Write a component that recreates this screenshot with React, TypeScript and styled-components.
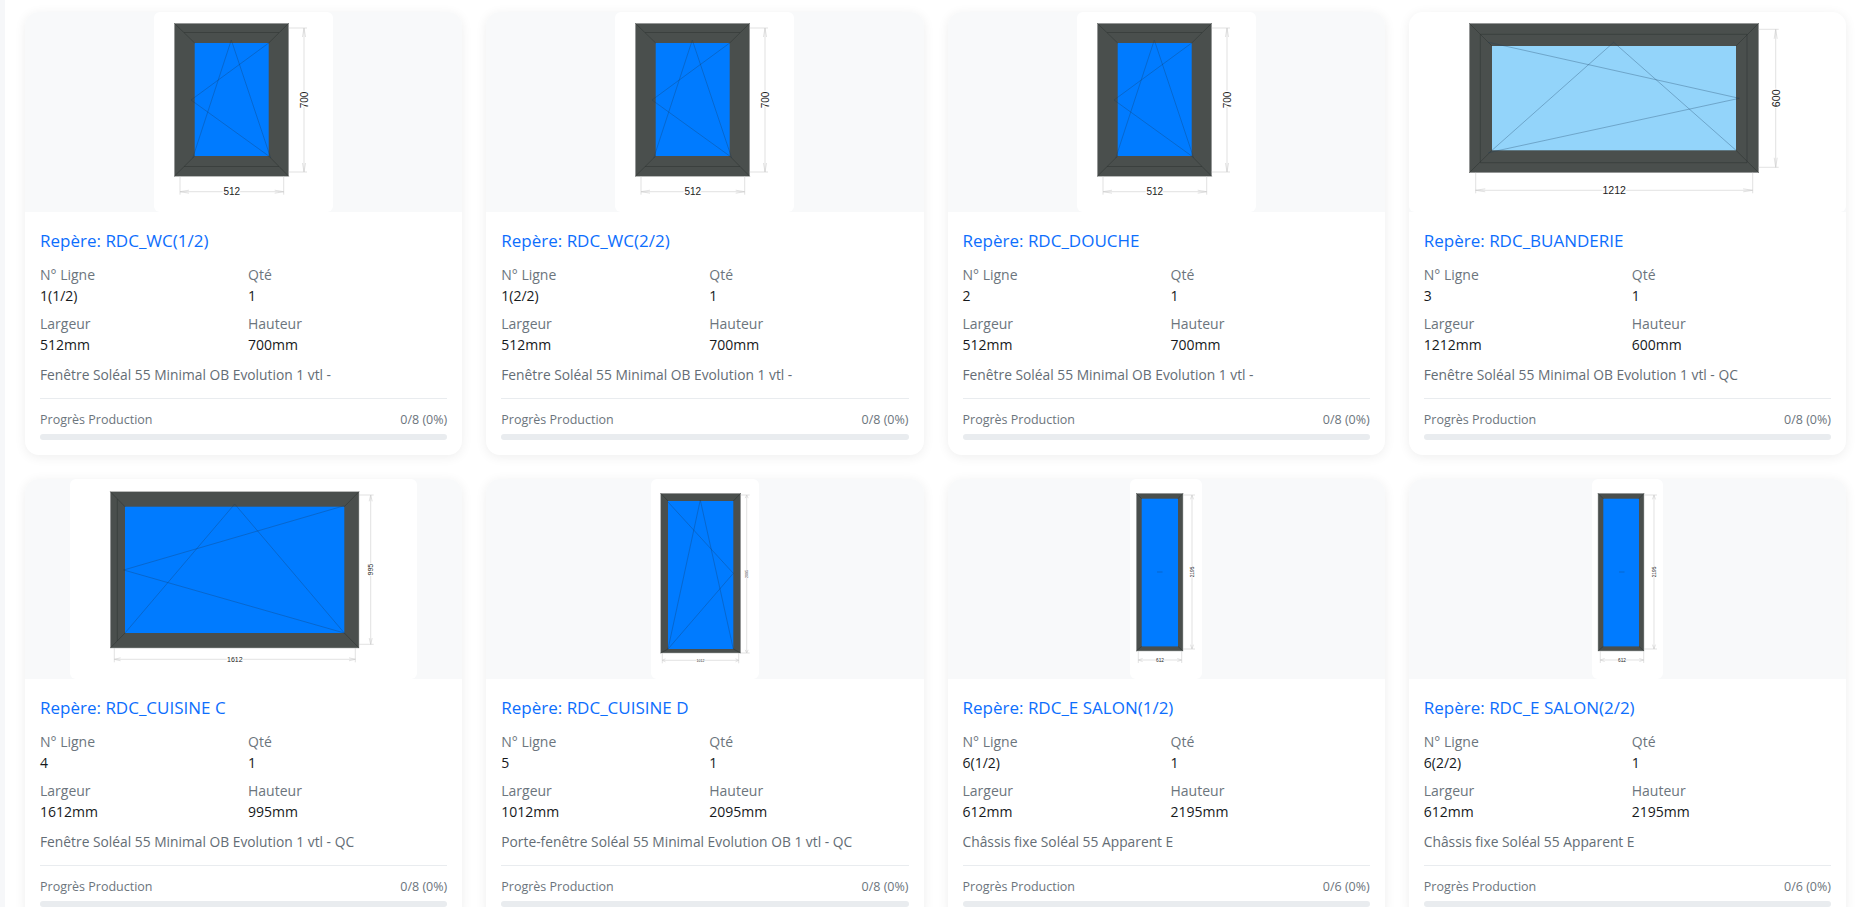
import React from 'react';
import styled, { createGlobalStyle } from 'styled-components';

const GlobalStyle = createGlobalStyle`
  html, body {
    margin: 0;
    height: 100%;
    overflow: hidden;
    background: #fff;
  }
  body {
    font-family: "Open Sans", "Noto Sans", "Liberation Sans", sans-serif;
    color: #212529;
  }
`;

const Page = styled.div`
  height: 907px;
  background: #fff;
  border-left: 5px solid #f6f7f9;
  padding: 12px 16px 0 20px;
  box-sizing: border-box;
  overflow: hidden;
`;

const Grid = styled.div`
  display: grid;
  grid-template-columns: repeat(4, 1fr);
  gap: 24px;
`;

const Card = styled.article`
  height: 443px;
  background: #fff;
  border-radius: 14px;
  overflow: hidden;
  box-shadow: 0 2px 12px rgba(0, 0, 0, 0.07);
  display: flex;
  flex-direction: column;
`;

const ImageArea = styled.div`
  height: 200px;
  background: #f8f9fa;
  display: flex;
  justify-content: center;
  flex: none;
`;

const Drawing = styled.svg`
  display: block;
  height: 200px;
  background: #fff;
  border-radius: 6px;
`;

const Body = styled.div`
  padding: 17px 15px 15px;
  display: flex;
  flex-direction: column;
`;

const Title = styled.h5`
  margin: 0 0 11px;
  font-size: 17px;
  line-height: 24px;
  font-weight: 500;
  color: #0d6efd;
`;

const Specs = styled.div`
  display: grid;
  grid-template-columns: 208px 1fr;
  row-gap: 7px;
`;

const Spec = styled.div`
  display: flex;
  flex-direction: column;
`;

const SpecLabel = styled.span`
  font-size: 14px;
  line-height: 21px;
  color: #6c757d;
`;

const SpecValue = styled.span`
  font-size: 14px;
  line-height: 21px;
  font-weight: 500;
  color: #16191c;
`;

const Description = styled.p`
  margin: 9px 0 13px;
  font-size: 13.8px;
  line-height: 21px;
  color: #646d75;
`;

const Progress = styled.div`
  border-top: 1px solid #e9ecef;
  padding-top: 12px;
`;

const ProgressHead = styled.div`
  display: flex;
  justify-content: space-between;
  font-size: 12.5px;
  line-height: 18px;
  color: #6c757d;
  margin-bottom: 5px;
`;

const ProgressTrack = styled.div`
  height: 6px;
  border-radius: 3px;
  background: #e9ecef;
`;

type Rect = [number, number, number, number];

type Shape = {
  panel: number;
  frame: Rect;
  glass: Rect;
  glassColor?: string;
  inner?: string;
  opening?: string;
  dimX: [number, number, number]; // x, y haut, y bas
  dimY: [number, number, number]; // y, x gauche, x droite
  label: number;
};

type Item = {
  repere: string;
  ligne: string;
  largeur: number;
  hauteur: number;
  description: string;
  total: number;
  shape: Shape;
};

const smallWindow: Shape = {
  panel: 179,
  frame: [20.3, 11.3, 114.4, 153],
  glass: [40.7, 31, 74, 113],
  inner: 'M30 20.5H125M30 154.5H125',
  opening: 'M38.7 146L77.3 28L116.7 146M114.7 31L37 88L114.7 144',
  dimX: [150, 16, 160],
  dimY: [179.7, 26, 129.7],
  label: 10,
};

const wideWindow: Shape = {
  panel: 437,
  frame: [60.3, 11.3, 289.4, 149.4],
  glass: [83, 34, 244, 104.3],
  glassColor: '#93d4fa',
  inner: 'M71.3 150.7V22.3H338V150.7H71.3',
  opening: 'M83 138.3L204.7 30.3L327 138.3M79.3 30.3L330.3 86.3L79.3 140.7',
  dimX: [366.7, 17.3, 155.3],
  dimY: [178.3, 66.7, 343.7],
  label: 10.6,
};

const kitchenWindow: Shape = {
  panel: 347,
  frame: [40.3, 12.7, 248.7, 156.3],
  glass: [55, 27.7, 219.3, 126.3],
  inner: 'M47.3 20V162',
  opening: 'M55 154L164.7 25L274.3 154M274.3 26.7L53.7 91L274.3 154',
  dimX: [300.7, 16, 165.3],
  dimY: [180.3, 44.3, 285.3],
  label: 7,
};

const door: Shape = {
  panel: 108,
  frame: [9.7, 14.3, 80, 159.7],
  glass: [17, 22, 65.3, 148],
  opening: 'M17 170L49.3 21L82.3 170M17 23L82.3 94.3L17 170',
  dimX: [95.7, 16, 174],
  dimY: [181.3, 11.3, 87.7],
  label: 3.5,
};

const fixedLeft: Shape = {
  panel: 72,
  frame: [6.3, 14.3, 46.7, 157.7],
  glass: [11.7, 19.7, 36.3, 147.7],
  opening: 'M27 93H32.5',
  dimX: [62, 16, 170],
  dimY: [181, 8.3, 51.7],
  label: 4.8,
};

const fixedRight: Shape = { ...fixedLeft, panel: 70.4, frame: [6, 14.3, 46, 157.7], glass: [11.3, 19.7, 35.7, 147.7] };

const fen = 'Fenêtre Soléal 55 Minimal OB Evolution 1 vtl -';
const fixe = 'Châssis fixe Soléal 55 Apparent E';

const items: Item[] = [
  { repere: 'RDC_WC(1/2)', ligne: '1(1/2)', largeur: 512, hauteur: 700, description: fen, total: 8, shape: smallWindow },
  { repere: 'RDC_WC(2/2)', ligne: '1(2/2)', largeur: 512, hauteur: 700, description: fen, total: 8, shape: smallWindow },
  { repere: 'RDC_DOUCHE', ligne: '2', largeur: 512, hauteur: 700, description: fen, total: 8, shape: smallWindow },
  { repere: 'RDC_BUANDERIE', ligne: '3', largeur: 1212, hauteur: 600, description: fen + ' QC', total: 8, shape: wideWindow },
  { repere: 'RDC_CUISINE C', ligne: '4', largeur: 1612, hauteur: 995, description: fen + ' QC', total: 8, shape: kitchenWindow },
  { repere: 'RDC_CUISINE D', ligne: '5', largeur: 1012, hauteur: 2095, description: 'Porte-fenêtre Soléal 55 Minimal Evolution OB 1 vtl - QC', total: 8, shape: door },
  { repere: 'RDC_E SALON(1/2)', ligne: '6(1/2)', largeur: 612, hauteur: 2195, description: fixe, total: 6, shape: fixedLeft },
  { repere: 'RDC_E SALON(2/2)', ligne: '6(2/2)', largeur: 612, hauteur: 2195, description: fixe, total: 6, shape: fixedRight },
];

// dessin technique de la fenêtre avec ses cotes
const WindowDrawing = ({ item }: { item: Item }) => {
  const { panel, frame, glass, glassColor, inner, opening, dimX, dimY, label } = item.shape;
  const [fx, fy, fw, fh] = frame;
  const [gx, gy, gw, gh] = glass;
  const [hx, hTop, hBottom] = dimX;
  const [wy, wLeft, wRight] = dimY;
  const tick = label * 0.9;
  const textProps = {
    textAnchor: 'middle' as const,
    fontFamily: 'Liberation Sans, sans-serif',
    fontSize: label,
    fill: '#222',
    stroke: '#fff',
    strokeWidth: label * 0.25,
    paintOrder: 'stroke',
  };

  return (
    <Drawing width={panel} height={200} viewBox={`0 0 ${panel} 200`}>
      <rect x={fx} y={fy} width={fw} height={fh} fill="#4a4f4d" stroke="#a9acab" strokeWidth={0.5} />
      <rect x={gx} y={gy} width={gw} height={gh} fill={glassColor ?? '#007bff'} />
      <g fill="none" stroke="#2d3230" strokeWidth={0.5}>
        <path d={`M${fx} ${fy}L${gx} ${gy}M${fx + fw} ${fy}L${gx + gw} ${gy}M${fx} ${fy + fh}L${gx} ${gy + gh}M${fx + fw} ${fy + fh}L${gx + gw} ${gy + gh}`} />
        {inner && <path d={inner} />}
      </g>
      {opening && <path d={opening} fill="none" stroke="#17395c" strokeOpacity={0.6} strokeWidth={0.5} />}
      <g fill="none" stroke="#cfcfcf" strokeWidth={0.6}>
        <path d={`M${fx + fw} ${hTop}H${hx + 3}M${fx + fw} ${hBottom}H${hx + 3}M${hx} ${hTop}V${hBottom}`} />
        <path d={`M${hx - 1.5} ${hTop + tick}L${hx} ${hTop}L${hx + 1.5} ${hTop + tick}M${hx - 1.5} ${hBottom - tick}L${hx} ${hBottom}L${hx + 1.5} ${hBottom - tick}`} />
        <path d={`M${wLeft} ${fy + fh}V${wy + 3}M${wRight} ${fy + fh}V${wy + 3}M${wLeft} ${wy}H${wRight}`} />
        <path d={`M${wLeft + tick} ${wy - 1.5}L${wLeft} ${wy}L${wLeft + tick} ${wy + 1.5}M${wRight - tick} ${wy - 1.5}L${wRight} ${wy}L${wRight - tick} ${wy + 1.5}`} />
      </g>
      <text x={(wLeft + wRight) / 2} y={wy + label * 0.36} {...textProps}>
        {item.largeur}
      </text>
      <text transform={`translate(${hx + label * 0.36} ${(hTop + hBottom) / 2}) rotate(-90)`} {...textProps}>
        {item.hauteur}
      </text>
    </Drawing>
  );
};

const ProductCard = ({ item }: { item: Item }) => (
  <Card>
    <ImageArea>
      <WindowDrawing item={item} />
    </ImageArea>
    <Body>
      <Title>Repère: {item.repere}</Title>
      <Specs>
        <Spec>
          <SpecLabel>N° Ligne</SpecLabel>
          <SpecValue>{item.ligne}</SpecValue>
        </Spec>
        <Spec>
          <SpecLabel>Qté</SpecLabel>
          <SpecValue>1</SpecValue>
        </Spec>
        <Spec>
          <SpecLabel>Largeur</SpecLabel>
          <SpecValue>{item.largeur}mm</SpecValue>
        </Spec>
        <Spec>
          <SpecLabel>Hauteur</SpecLabel>
          <SpecValue>{item.hauteur}mm</SpecValue>
        </Spec>
      </Specs>
      <Description>{item.description}</Description>
      <Progress>
        <ProgressHead>
          <span>Progrès Production</span>
          <span>0/{item.total} (0%)</span>
        </ProgressHead>
        <ProgressTrack />
      </Progress>
    </Body>
  </Card>
);

export default function App() {
  return (
    <>
      <GlobalStyle />
      <Page>
        <Grid>
          {items.map((item) => (
            <ProductCard key={item.repere} item={item} />
          ))}
        </Grid>
      </Page>
    </>
  );
}
